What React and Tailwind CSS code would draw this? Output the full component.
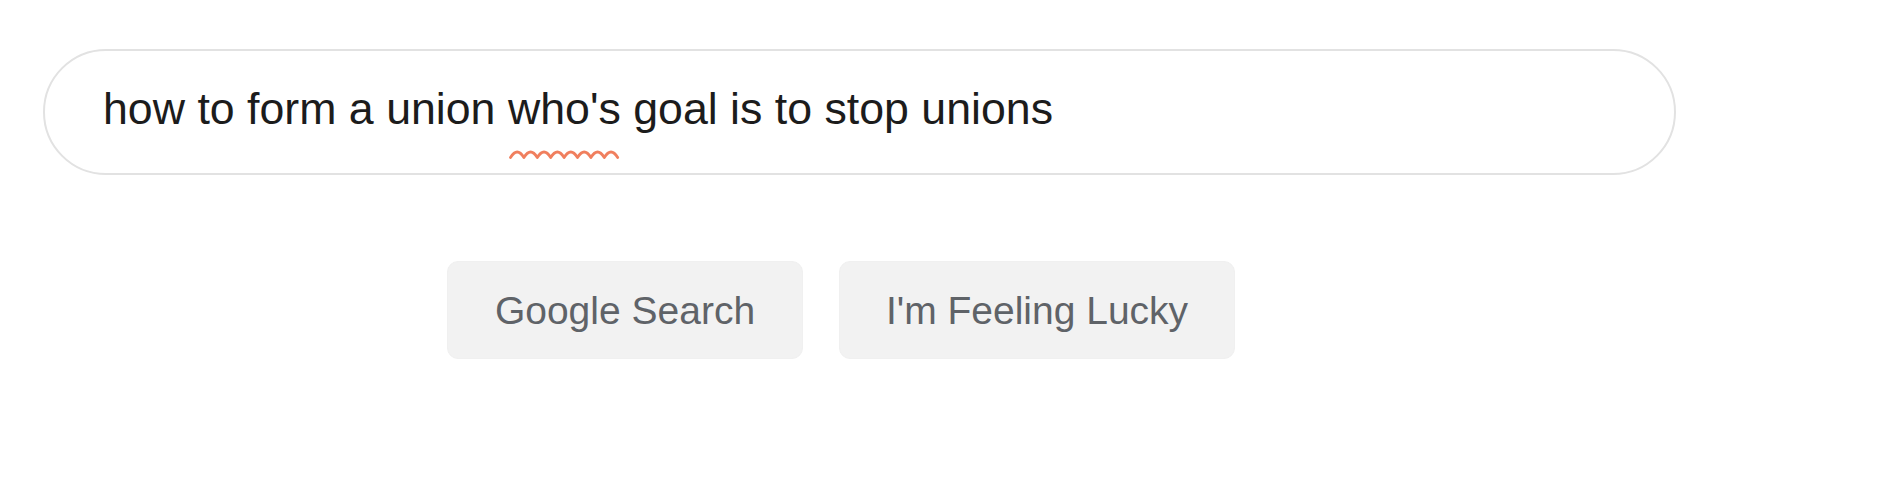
import React from 'react';

const Squiggle = () => (
  <svg
    className="absolute left-[1px] top-[64px]"
    width="112"
    height="12"
    viewBox="0 0 112 12"
    fill="none"
  >
    <path
      d="M1.5 9.5 Q8.2 -1.5 14.9 9.5 Q21.6 -1.5 28.3 9.5 Q35 -1.5 41.7 9.5 Q48.4 -1.5 55.1 9.5 Q61.8 -1.5 68.5 9.5 Q75.2 -1.5 81.9 9.5 Q88.6 -1.5 95.3 9.5 Q102 -1.5 108.7 9.5"
      stroke="#f07f5e"
      strokeWidth="2.8"
      strokeLinecap="round"
      strokeLinejoin="round"
    />
  </svg>
);

const SearchButton = ({ label, width }) => (
  <button
    className={`${width} h-[98px] rounded-[11px] bg-[#f2f2f2] border border-[#f0f0f0] text-[39px] leading-[39px] text-[#5f6368] flex items-center justify-center`}
  >
    {label}
  </button>
);

const App = () => {
  return (
    <div
      className="w-[1882px] h-[479px] bg-white pl-[43px] pt-[49px]"
      style={{ fontFamily: '"Liberation Sans", Arial, sans-serif' }}
    >
      <div className="w-[1633px] h-[126px] box-border rounded-full border-2 border-[#e2e2e2] pl-[58px] pt-[35px]">
        <div className="text-[44.7px] leading-[45px] text-[#1c1c1c] whitespace-nowrap">
          how to form a union{' '}
          <span className="relative">
            who's
            <Squiggle />
          </span>{' '}
          goal is to stop unions
        </div>
      </div>

      <div className="flex gap-[36px] pl-[404px] mt-[86px]">
        <SearchButton label="Google Search" width="w-[356px]" />
        <SearchButton label="I'm Feeling Lucky" width="w-[396px]" />
      </div>
    </div>
  );
};

export default App;
